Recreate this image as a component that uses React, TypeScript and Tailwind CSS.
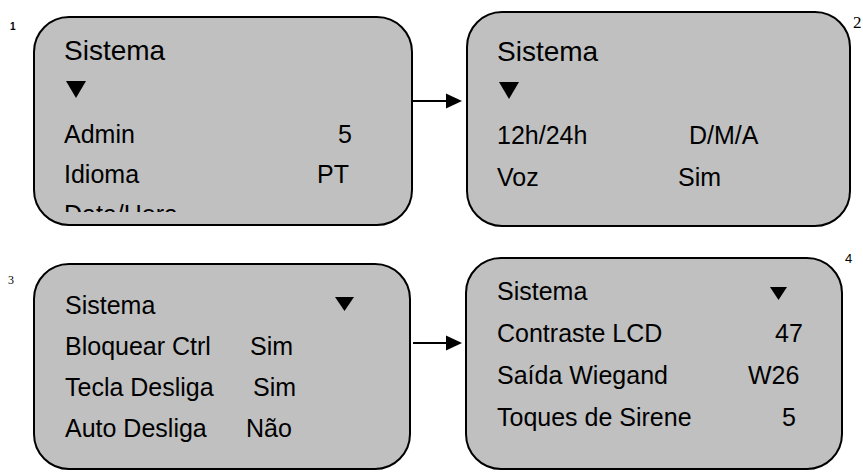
import React from "react";

interface Row {
  label: string;
  value: string;
  labelWidth: string;
}

const Tri = ({ w, h, className = "" }: { w: number; h: number; className?: string }) => (
  <svg width={w} height={h} viewBox={`0 0 ${w} ${h}`} className={className}>
    <polygon points={`0,0 ${w},0 ${w / 2},${h}`} fill="#000" />
  </svg>
);

const Arrow = ({ width, start }: { width: number; start: number }) => (
  <svg width={width} height={16} viewBox={`0 0 ${width} 16`} className="block">
    <line x1={start} y1={8} x2={start + 36} y2={8} stroke="#000" strokeWidth={2} />
    <polygon points={`${start + 33},0.5 ${start + 49},8 ${start + 33},15.5`} fill="#000" />
  </svg>
);

const box1Rows: Row[] = [
  { label: "Admin", value: "5", labelWidth: "w-[274px]" },
  { label: "Idioma", value: "PT", labelWidth: "w-[253px]" },
  { label: "Data/Hora", value: "", labelWidth: "w-[253px]" },
];

const box2Rows: Row[] = [
  { label: "12h/24h", value: "D/M/A", labelWidth: "w-[192px]" },
  { label: "Voz", value: "Sim", labelWidth: "w-[181px]" },
];

const box3Rows: Row[] = [
  { label: "Bloquear Ctrl", value: "Sim", labelWidth: "w-[185px]" },
  { label: "Tecla Desliga", value: "Sim", labelWidth: "w-[188px]" },
  { label: "Auto Desliga", value: "Não", labelWidth: "w-[181px]" },
];

const box4Rows: Row[] = [
  { label: "Contraste LCD", value: "47", labelWidth: "w-[278px]" },
  { label: "Saída Wiegand", value: "W26", labelWidth: "w-[251px]" },
  { label: "Toques de Sirene", value: "5", labelWidth: "w-[285px]" },
];

const MenuRow = ({ row, height }: { row: Row; height: string }) => (
  <div className={`flex text-[25px] whitespace-nowrap ${height}`}>
    <span className={`${row.labelWidth} shrink-0`}>{row.label}</span>
    <span>{row.value}</span>
  </div>
);

export default function App() {
  return (
    <div className="w-[863px] h-[473px] bg-white text-black font-['Liberation_Sans',Arial,sans-serif] overflow-hidden">
      {/* top pair */}
      <div className="flex items-start h-[240px]">
        <div className="w-[33px] shrink-0 pl-[10px] pt-[22px] text-[10px] leading-none font-bold">1</div>
        <div className="w-[380px] h-[210px] mt-[16px] shrink-0 rounded-[36px] border-2 border-black bg-[#c0c0c0] pl-[29px] pt-[13px]">
          <div className="h-[181px] overflow-hidden">
            <div className="h-[40px] leading-[40px] text-[28px]">Sistema</div>
            <div className="h-[43px] pt-[10px]">
              <Tri w={20} h={17} className="ml-[2px]" />
            </div>
            {box1Rows.map((r) => (
              <MenuRow key={r.label} row={r} height="h-[40px] leading-[40px]" />
            ))}
          </div>
        </div>
        <div className="w-[53px] shrink-0 mt-[93px]">
          <Arrow width={53} start={0} />
        </div>
        <div className="w-[385px] h-[216px] mt-[11px] shrink-0 rounded-[36px] border-2 border-black bg-[#c0c0c0] pl-[29px] pt-[19px]">
          <div className="h-[40px] leading-[40px] text-[28px]">Sistema</div>
          <div className="h-[43px] pt-[10px]">
            <Tri w={20} h={17} className="ml-[2px]" />
          </div>
          {box2Rows.map((r) => (
            <MenuRow key={r.label} row={r} height="h-[42px] leading-[40px]" />
          ))}
        </div>
        <div className="ml-[2px] pt-[14px] text-[17px] leading-none font-['Liberation_Serif',serif]">2</div>
      </div>

      {/* bottom pair */}
      <div className="flex items-start">
        <div className="w-[33px] shrink-0 pl-[8px] pt-[34px] text-[12px] leading-none font-['Liberation_Serif',serif]">3</div>
        <div className="w-[378px] h-[207px] mt-[23px] shrink-0 rounded-[36px] border-2 border-black bg-[#c0c0c0] pl-[30px] pt-[20px]">
          <div className="flex h-[41px] leading-[41px] text-[25px]">
            <span className="w-[270px] shrink-0">Sistema</span>
            <Tri w={19} h={14} className="mt-[12px]" />
          </div>
          {box3Rows.map((r) => (
            <MenuRow key={r.label} row={r} height="h-[41px] leading-[41px]" />
          ))}
        </div>
        <div className="w-[54px] shrink-0 mt-[95px]">
          <Arrow width={54} start={2} />
        </div>
        <div className="w-[378px] h-[213px] mt-[17px] shrink-0 rounded-[36px] border-2 border-black bg-[#c0c0c0] pl-[30px] pt-[12px]">
          <div className="flex h-[42px] leading-[41px] text-[25px]">
            <span className="w-[273px] shrink-0">Sistema</span>
            <Tri w={17} h={13} className="mt-[16px]" />
          </div>
          {box4Rows.map((r) => (
            <MenuRow key={r.label} row={r} height="h-[42px] leading-[41px]" />
          ))}
        </div>
        <div className="ml-[2px] pt-[12px] text-[13px] leading-none">4</div>
      </div>
    </div>
  );
}
